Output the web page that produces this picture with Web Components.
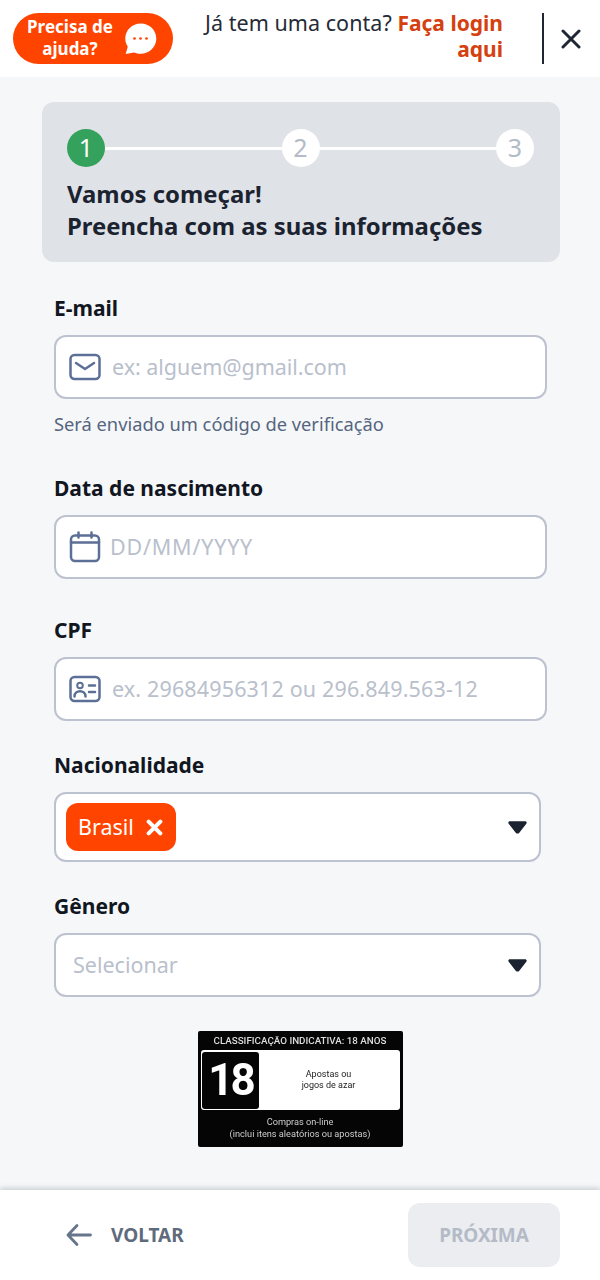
<!DOCTYPE html>
<html lang="pt-BR"><head><meta charset="utf-8"><title>Cadastro</title>
<style>
html,body{margin:0;padding:0;height:1280px;overflow:hidden;background:#f5f7f9;font-family:"Noto Sans","Open Sans",sans-serif}
</style></head><body>
<signup-page></signup-page>
<script>
const F='"Noto Sans","Open Sans",sans-serif';
function el(name,css,html,setup){
  customElements.define(name,class extends HTMLElement{
    constructor(){super();this.attachShadow({mode:'open'}).innerHTML=`<style>${css}</style>${html}`;}
    connectedCallback(){setup&&setup(this)}
  });
}
el('help-pill',`:host{display:flex;align-items:center;box-sizing:border-box;width:160px;height:51px;border-radius:26px;background:#ff4400;color:#fff;padding:0 16px 0 11px;font:700 17px/22px ${F}}
.t{flex:1;text-align:center;white-space:nowrap;padding-bottom:1px}svg{display:block;flex:none;margin-left:8px}`,
`<div class="t">Precisa de<br>ajuda?</div><svg width="33" height="33" viewBox="0 0 34 34"><path d="M17.300 1.500C8.400 1.500 1.300 8.400 1.300 17c0 3.200 1 6 2.600 8.500L1.700 33l8.800-1.700c2 .9 4.300 1.400 6.800 1.400 8.800 0 16-7 16-15.700S26.100 1.500 17.300 1.500Z" fill="#fff"/><g fill="#ff4400"><circle cx="10.800" cy="17" r="1.400"/><circle cx="17" cy="17" r="1.400"/><circle cx="23.200" cy="17" r="1.400"/></g></svg>`);
el('top-bar',`:host{display:flex;align-items:center;box-sizing:border-box;height:77px;background:#fff;padding:0 19px 0 13px}
.login{width:300px;margin-left:30px;text-align:right;font:400 21.500px/25px ${F};color:#252b36;letter-spacing:.05px;box-sizing:border-box;padding-bottom:5px}
.login b{color:#d5400f;font-weight:700;font-size:21px;letter-spacing:0}
.sep{width:2px;height:51px;background:#1f2733;margin-left:39px}
svg{display:block;margin-left:17px}`,
`<help-pill></help-pill><div class="login">Já tem uma conta? <b>Faça login aqui</b></div><div class="sep"></div><svg width="20" height="20" viewBox="0 0 20 20"><path d="M2 2l16 16M18 2L2 18" stroke="#1f2733" stroke-width="3" stroke-linecap="round" fill="none"/></svg>`);
el('step-dot',`:host{display:flex;align-items:center;justify-content:center;flex:none;box-sizing:border-box;width:38px;height:38px;padding-bottom:2px;border-radius:50%;background:#fff;color:#b4bbc7;font:400 25px/1 ${F}}
:host([active]){background:#34a25c;color:#fff}`,`<slot></slot>`);
el('step-card',`:host{display:block;box-sizing:border-box;height:160px;margin:25px 40px 0 42px;padding:27px 26px 0 25px;border-radius:12px;background:#dfe2e7}
.s{display:flex;align-items:center}.l{flex:1;height:3px;background:#fff}
h2{margin:11px 0 0;font:700 23.900px/32px ${F};color:#1b2330;white-space:nowrap}`,
`<div class="s"><step-dot active>1</step-dot><div class="l"></div><step-dot>2</step-dot><div class="l"></div><step-dot>3</step-dot></div><h2>Vamos começar!<br>Preencha com as suas informações</h2>`);
el('form-field',`:host{display:block;margin-top:var(--top,0)}
label{display:block;font:700 21px/28px ${F};color:#11161f;margin-bottom:13px}
.h{margin-top:13px;font:400 18.300px/24px ${F};color:#56657f}
.h:empty{display:none}`,
`<label></label><slot></slot><div class="h"></div>`,
s=>{s.shadowRoot.querySelector('label').textContent=s.getAttribute('label');s.shadowRoot.querySelector('.h').textContent=s.getAttribute('hint')||''});
el('text-box',`:host{display:flex;align-items:center;box-sizing:border-box;width:493px;height:64px;background:#fff;border:2px solid #bcc2cf;border-radius:12px;padding-left:13px}
span{font:400 21.500px/1 ${F};color:#b9c0cc;margin-left:var(--ph,11px);letter-spacing:var(--ls,0);white-space:nowrap}`,
`<slot name="i"></slot><span></span>`,
s=>{s.shadowRoot.querySelector('span').textContent=s.getAttribute('placeholder')});
el('select-box',`:host{display:flex;align-items:center;box-sizing:border-box;width:487px;background:#fff;border:2px solid #bcc2cf;border-radius:12px;padding:0 12px 0 10px}
.b{flex:1}svg{display:block;flex:none}`,
`<div class="b"><slot></slot></div><svg width="19" height="13" viewBox="0 0 19 13"><path d="M2 .3h15c1.500 0 2.200 1.400 1.300 2.500l-7 8.900c-1 1.200-2.600 1.200-3.600 0l-7-8.900C-.2 1.700.5.300 2 .3Z" fill="#1b2330"/></svg>`);
el('tag-chip',`:host{display:inline-flex;align-items:center;box-sizing:border-box;height:48px;width:110px;border-radius:12px;background:#ff4400;color:#fff;padding-left:12px;font:400 21.500px/1 ${F}}
svg{display:block;margin-left:12px}`,
`<slot></slot><svg width="17" height="17" viewBox="0 0 16 16"><path d="M2.500 2.500l11 11M13.500 2.500l-11 11" stroke="#fff" stroke-width="3.800" stroke-linecap="round"/></svg>`);
el('age-rating',`:host{display:block;box-sizing:border-box;width:205px;height:116px;margin:34px auto 0;background:#050505;border-radius:2px;color:#fff;text-align:center;filter:blur(.4px);overflow:hidden;padding:4px 3px 0}
.t{font:500 9.800px/12px "Roboto",${F};color:#ddd;white-space:nowrap}
.m{display:flex;box-sizing:border-box;height:60px;margin-top:3px;background:#fff;border-radius:3px;color:#222;padding:1.500px}
.n{width:57px;flex:none;background:#050505;border-radius:3px;color:#fff;font:700 44px/57px "Roboto",${F};letter-spacing:-3px}
.d{flex:1;display:flex;align-items:center;justify-content:center;font:400 9px/11px "Roboto",${F}}
.b{margin-top:6px;font:400 9.200px/12px "Roboto",${F};color:#ccc;white-space:nowrap}`,
`<div class="t">CLASSIFICAÇÃO INDICATIVA: 18 ANOS</div><div class="m"><div class="n">18</div><div class="d"><div>Apostas ou<br>jogos de azar</div></div></div><div class="b">Compras on-line<br>(inclui itens aleatórios ou apostas)</div>`);
el('bottom-bar',`:host{display:flex;align-items:center;box-sizing:border-box;height:90px;background:#fff;box-shadow:0 -2px 5px rgba(60,70,85,.22);padding:0 40px 0 66px}
.b{display:flex;align-items:center;flex:1;font:700 19px/1 ${F};color:#5f6b7d}
svg{display:block;margin-right:19px}
.n{display:flex;align-items:center;justify-content:center;width:152px;height:64px;border-radius:12px;background:#ebedf0;color:#b4bbc7;font:700 19px/1 ${F};letter-spacing:-.1px}`,
`<div class="b"><svg width="26" height="26" viewBox="0 0 26 26"><path d="M24.500 13H2.500M11 3.500L2 13l9 9.500" fill="none" stroke="#66758c" stroke-width="2.800" stroke-linecap="round" stroke-linejoin="round"/></svg>VOLTAR</div><div class="n">PRÓXIMA</div>`);
el('signup-page',`:host{display:flex;flex-direction:column;height:1280px;background:#f5f7f9}
main{flex:1;display:block;min-height:0}
form{display:block;padding:32px 0 0 54px}
svg{display:block;flex:none}
.sel{display:block;margin-left:7px;font:400 21.500px/1 ${F};color:#b9c0cc}`,
`<top-bar></top-bar><main><step-card></step-card>
<form>
<form-field label="E-mail" hint="Será enviado um código de verificação"><text-box placeholder="ex: alguem@gmail.com" style="--ls:-.05px"><svg slot="i" width="32" height="28" viewBox="0 0 32 28"><rect x="1.500" y="2" width="29" height="24" rx="4" fill="none" stroke="#5c6f97" stroke-width="2.500"/><path d="M7 10l9 6 9-6" fill="none" stroke="#5c6f97" stroke-width="2.500" stroke-linecap="round" stroke-linejoin="round"/></svg></text-box></form-field>
<form-field label="Data de nascimento" style="--top:38px"><text-box placeholder="DD/MM/YYYY" style="--ph:9px;--ls:.8px"><svg slot="i" width="32" height="32" viewBox="0 0 32 32"><rect x="2" y="4.500" width="28" height="25.500" rx="4" fill="none" stroke="#5c6f97" stroke-width="2.500"/><path d="M2 11.500h28M9.500 1.500v5M22.500 1.500v5" fill="none" stroke="#5c6f97" stroke-width="2.500" stroke-linecap="round"/></svg></text-box></form-field>
<form-field label="CPF" style="--top:37px"><text-box placeholder="ex. 29684956312 ou 296.849.563-12" style="--ls:.15px"><svg slot="i" width="32" height="28" viewBox="0 0 32 28"><rect x="1.500" y="2" width="29" height="24" rx="4" fill="none" stroke="#5c6f97" stroke-width="2.500"/><circle cx="11" cy="10.500" r="2.800" fill="none" stroke="#5c6f97" stroke-width="2"/><path d="M5.500 21.500c0-7 11-7 11 0M20 10.500h6M20 17h6" fill="none" stroke="#5c6f97" stroke-width="2.500" stroke-linecap="round"/></svg></text-box></form-field>
<form-field label="Nacionalidade" style="--top:30px"><select-box style="height:70px"><tag-chip>Brasil</tag-chip></select-box></form-field>
<form-field label="Gênero" style="--top:30px"><select-box style="height:64px"><span class="sel">Selecionar</span></select-box></form-field>
</form>
<age-rating></age-rating></main><bottom-bar></bottom-bar>`);
</script>
</body></html>
